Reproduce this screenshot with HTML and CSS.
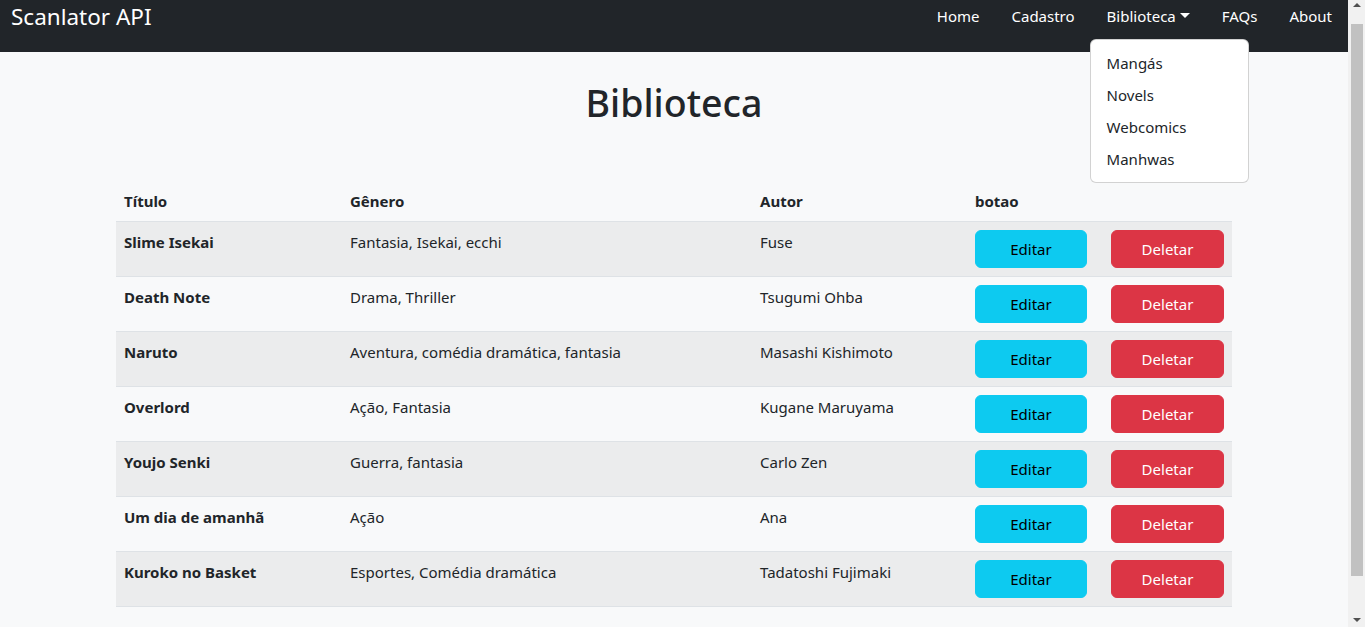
FILE: index.html
```html
<!DOCTYPE html>
<html lang="pt-BR">
<head>
<meta charset="utf-8">
<title>Scanlator API</title>
<link rel="stylesheet" href="styles.css">
</head>
<body>
<div class="page">
  <nav class="navbar">
    <a class="brand" href="#">Scanlator API</a>
    <ul class="nav">
      <li><a class="nav-link" href="#">Home</a></li>
      <li><a class="nav-link" href="#">Cadastro</a></li>
      <li class="dropdown">
        <a class="nav-link dropdown-toggle" href="#">Biblioteca</a>
        <ul class="dropdown-menu">
          <li><a class="dropdown-item" href="#">Mangás</a></li>
          <li><a class="dropdown-item" href="#">Novels</a></li>
          <li><a class="dropdown-item" href="#">Webcomics</a></li>
          <li><a class="dropdown-item" href="#">Manhwas</a></li>
        </ul>
      </li>
      <li><a class="nav-link" href="#">FAQs</a></li>
      <li><a class="nav-link" href="#">About</a></li>
    </ul>
  </nav>
  <main class="container">
    <h1 class="title">Biblioteca</h1>
    <table class="table">
      <colgroup>
        <col class="c1"><col class="c2"><col class="c3"><col class="c4"><col class="c5">
      </colgroup>
      <thead>
        <tr><th>Título</th><th>Gênero</th><th>Autor</th><th>botao</th><th></th></tr>
      </thead>
      <tbody>
        <tr><th>Slime Isekai</th><td>Fantasia, Isekai, ecchi</td><td>Fuse</td><td><button class="btn btn-info">Editar</button></td><td><button class="btn btn-danger">Deletar</button></td></tr>
        <tr><th>Death Note</th><td>Drama, Thriller</td><td>Tsugumi Ohba</td><td><button class="btn btn-info">Editar</button></td><td><button class="btn btn-danger">Deletar</button></td></tr>
        <tr><th>Naruto</th><td>Aventura, comédia dramática, fantasia</td><td>Masashi Kishimoto</td><td><button class="btn btn-info">Editar</button></td><td><button class="btn btn-danger">Deletar</button></td></tr>
        <tr><th>Overlord</th><td>Ação, Fantasia</td><td>Kugane Maruyama</td><td><button class="btn btn-info">Editar</button></td><td><button class="btn btn-danger">Deletar</button></td></tr>
        <tr><th>Youjo Senki</th><td>Guerra, fantasia</td><td>Carlo Zen</td><td><button class="btn btn-info">Editar</button></td><td><button class="btn btn-danger">Deletar</button></td></tr>
        <tr><th>Um dia de amanhã</th><td>Ação</td><td>Ana</td><td><button class="btn btn-info">Editar</button></td><td><button class="btn btn-danger">Deletar</button></td></tr>
        <tr><th>Kuroko no Basket</th><td>Esportes, Comédia dramática</td><td>Tadatoshi Fujimaki</td><td><button class="btn btn-info">Editar</button></td><td><button class="btn btn-danger">Deletar</button></td></tr>
      </tbody>
    </table>
  </main>
</div>
<div class="scrollbar" aria-hidden="true">
  <span class="sb-arrow sb-up"></span>
  <span class="sb-thumb"></span>
  <span class="sb-arrow sb-down"></span>
</div>
</body>
</html>
```
FILE: styles.css
```css
* { box-sizing: border-box; }

html, body {
  margin: 0;
  padding: 0;
}

body {
  display: flex;
  height: 100vh;
  overflow: hidden;
  font-family: "Noto Sans", "Open Sans", sans-serif;
  font-size: 15px;
  line-height: 24px;
  color: #212529;
  background: #f8f9fa;
}

a { text-decoration: none; }

.page {
  flex: 1;
  min-width: 0;
  overflow: hidden;
}

/* fake classic scrollbar of the screenshot */
.scrollbar {
  width: 17px;
  flex: none;
  background: #f1f1f1;
  display: flex;
  flex-direction: column;
  align-items: center;
}

.sb-arrow {
  width: 0;
  height: 0;
  border-left: 4px solid transparent;
  border-right: 4px solid transparent;
}

.sb-up {
  margin-top: 3px;
  border-bottom: 4px solid #505050;
}

.sb-thumb {
  width: 12px;
  height: 552px;
  margin-top: 17px;
  background: #c1c1c1;
}

.sb-down {
  margin-top: auto;
  margin-bottom: 5px;
  border-top: 4px solid #505050;
}

.navbar {
  height: 52px;
  background: #212529;
  display: flex;
  justify-content: space-between;
  align-items: flex-start;
}

.brand {
  color: #fff;
  font-size: 22.5px;
  line-height: 32px;
  padding-top: 1px;
  margin-left: 11px;
}

.nav {
  list-style: none;
  margin: 0;
  padding: 0;
  display: flex;
}

.nav > li { position: relative; }

.nav-link {
  display: block;
  color: #fff;
  padding: 4px 16px 6px;
  line-height: 24px;
}

.dropdown-toggle::after {
  content: "";
  display: inline-block;
  margin-left: 4px;
  vertical-align: 4px;
  border-top: 5px solid #fff;
  border-left: 5px solid transparent;
  border-right: 5px solid transparent;
}

.dropdown-menu {
  position: absolute;
  top: 39px;
  left: -1px;
  width: 159px;
  margin: 0;
  padding: 7px 0;
  list-style: none;
  background: #fff;
  border: 1px solid rgba(0, 0, 0, 0.175);
  border-radius: 6px;
  z-index: 10;
}

.dropdown-item {
  display: block;
  padding: 4px 16px;
  color: #212529;
  line-height: 24px;
}

.container {
  width: 1140px;
  margin: 0 auto;
  padding: 0 12px 200px;
}

.title {
  margin: 27px 0 54px;
  font-size: 37.5px;
  line-height: 48px;
  font-weight: 500;
  text-align: center;
}

.table {
  width: 100%;
  border-collapse: collapse;
  table-layout: fixed;
}

.c1 { width: 226px; }
.c2 { width: 410px; }
.c3 { width: 215px; }
.c4 { width: 136px; }
.c5 { width: 129px; }

.table th,
.table td {
  padding: 8px;
  text-align: left;
  vertical-align: top;
  border-bottom: 1px solid #dee2e6;
}

.table th { font-weight: 700; }

.table thead th { vertical-align: bottom; }

.table tbody tr:nth-child(odd) { background: #ebeced; }

.btn {
  display: block;
  height: 38px;
  padding: 6px 12px;
  font: inherit;
  font-size: 15px;
  line-height: 24px;
  border: 1px solid transparent;
  border-radius: 6px;
  text-align: center;
  cursor: pointer;
}

.btn-info {
  width: 112px;
  background: #0dcaf0;
  border-color: #0dcaf0;
  color: #000;
}

.btn-danger {
  width: 113px;
  background: #dc3545;
  border-color: #dc3545;
  color: #fff;
}
```
